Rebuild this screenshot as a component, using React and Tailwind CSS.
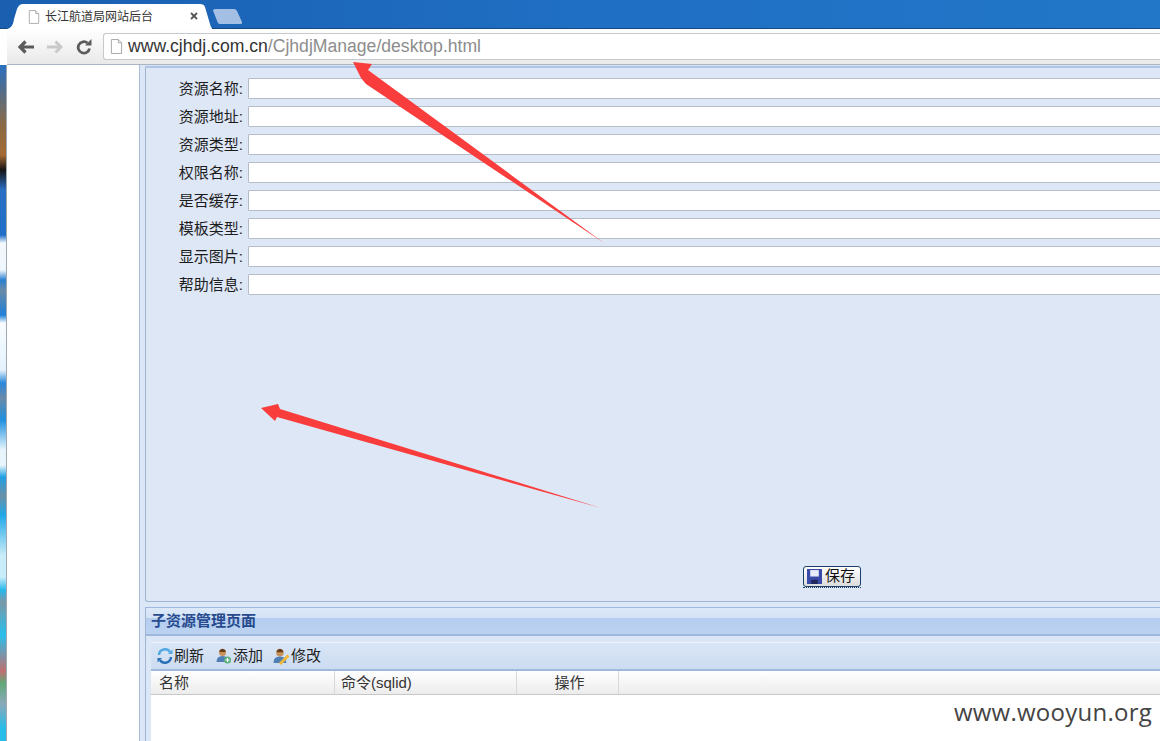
const labels = ["资源名称", "资源地址", "资源类型", "权限名称", "是否缓存", "模板类型", "显示图片", "帮助信息"];
const cjk = { fontFamily: '"Liberation Sans","Noto Sans CJK SC",sans-serif' };

function PageIcon({ className }) {
  return (
    <svg viewBox="0 0 14 16" className={className}>
      <path d="M1.5 .5H9L12.5 4V15.5H1.5Z" fill="#fff" stroke="#a3a3a3" />
      <path d="M9 .5V4H12.5" fill="#eee" stroke="#a3a3a3" />
    </svg>
  );
}

function Field({ label }) {
  return (
    <div className="flex items-center h-[28px]">
      <div className="w-[96px] text-right text-[15px] text-[#1c1c1c] pr-[5px] pt-[1px] leading-[21px] shrink-0 whitespace-nowrap">{label}:</div>
      <div className="flex-1 -mr-[4px] h-[21px] bg-white border border-[#b4bdc9] rounded-[1px]" />
    </div>
  );
}

function Tool({ icon, label, w }) {
  return (
    <div className={`flex items-center ${w}`}>
      {icon}
      <span className="text-[15px] text-[#222] ml-[1px]">{label}</span>
    </div>
  );
}

export default function App() {
  return (
    <div className="relative w-[1160px] h-[741px] overflow-hidden flex flex-col bg-white" style={cjk}>
      {/* browser chrome */}
      <div className="h-[29px] shrink-0 bg-gradient-to-r from-[#1a5fb0] via-[#1f6fc4] to-[#2277c8] border-b border-[#14497f] flex items-end pl-[7px]">
        <div className="relative z-10 -mb-[1px] w-[205px] h-[25px] flex items-center pl-[21px]">
          <svg viewBox="0 0 205 25" className="absolute inset-0 w-[205px] h-[25px]">
            <path d="M0 25Q6 24 7 15L10 5Q12 0 16 0H193Q197 0 198 3L203 20Q204 24 205 24V25Z" fill="#fff" />
          </svg>
          <PageIcon className="relative w-[12px] h-[14px]" />
          <span className="relative ml-[5px] text-[12px] text-[#333]">长江航道局网站后台</span>
          <svg viewBox="0 0 8 8" className="absolute left-[183px] top-[8px] w-[8px] h-[8px]">
            <path d="M1 1L7 7M7 1L1 7" stroke="#555" strokeWidth="1.8" />
          </svg>
        </div>
        <svg viewBox="0 0 31 15" className="w-[31px] h-[15px] mb-[4px]">
          <path d="M1 1.500Q1 0 3 0H22Q24 0 25 2L30 13Q30.500 15 28 15H8Q6 15 5.500 13Z" fill="#a4bfe4" />
        </svg>
      </div>
      <div className="h-[36px] shrink-0 flex bg-gradient-to-b from-white to-[#e9e9e9] border-b border-[#a9b4c4] ml-[7px] items-center pl-[11px] pr-0">
        <svg viewBox="0 0 16 14" className="w-[16px] h-[14px]">
          <path d="M7.500 1.500L2 7L7.500 12.500M3 7H16" fill="none" stroke="#5b5b5b" strokeWidth="3.200" />
        </svg>
        <svg viewBox="0 0 16 14" className="w-[16px] h-[14px] ml-[13px]">
          <path d="M8.500 1.500L14 7L8.500 12.500M13 7H0" fill="none" stroke="#c9c9c9" strokeWidth="3" />
        </svg>
        <svg viewBox="0 0 16 16" className="w-[16px] h-[16px] ml-[13px]">
          <path d="M13.500 9.500A5.700 5.700 0 1 1 11.500 4" fill="none" stroke="#5b5b5b" strokeWidth="2.800" />
          <path d="M9 6.500H15.500V0Z" fill="#5b5b5b" />
        </svg>
        <div className="ml-[11px] flex-1 h-[27px] bg-white border border-[#c6c9cd] border-r-0 rounded-l-[3px] flex items-center pl-[6px]">
          <PageIcon className="w-[13px] h-[15px]" />
          <span className="ml-[5px] text-[17.6px] text-[#333] whitespace-nowrap">
            www.cjhdj.com.cn<span className="text-[#8d8d8d]">/CjhdjManage/desktop.html</span>
          </span>
        </div>
      </div>

      {/* page */}
      <div className="flex-1 min-h-0 flex">
        <div className="w-[7px] shrink-0 border-r border-[#9fa8b0] bg-[linear-gradient(#2a6fc0_0px,#8a6a44_60px,#a56a34_90px,#141414_105px,#2a6fc4_125px,#1f6fc8_170px,#f4f8fc_178px,#eef6fc_205px,#2a80d4_215px,#6a8aa8_225px,#1f80d8_250px,#f8fcff_258px,#e4f2fc_305px,#2a88dc_318px,#6a8aa8_333px,#1f90e0_355px,#e8f6fc_385px,#e8f6fc_400px,#20a0e4_412px,#6a90a8_431px,#20a8e8_450px,#c8ecf8_490px,#c8ecf8_512px,#28b8ec_525px,#7a98a8_537px,#28c0ec_570px,#c07070_606px,#60a878_618px,#8aa8b8_639px,#28bce8_663px)]" />
        <div className="w-[132px] shrink-0 bg-white" />
        <div className="flex-1 min-w-0 border-l border-[#a9bcd8] bg-[#dbe6f6] pl-[5px] flex flex-col">
          <div className="h-[1px] bg-[#dbe4f2] shrink-0" />
          <div className="h-[2px] bg-[#b0c4e6] shrink-0" />
          <div className="h-[534px] shrink-0 bg-[#dee7f6] border border-r-0 border-t-0 border-[#9fb5d3] rounded-bl-[3px] flex flex-col">
            <div className="pl-[6px] pt-[6px]">
              {labels.map((l) => (
                <Field key={l} label={l} />
              ))}
            </div>
            <div className="flex-1 flex items-end pl-[657px] pb-[13px]">
              <div className="w-[58px] h-[22px] border-b border-dotted border-[#1c3f66]">
                <div className="h-[21px] rounded-[3px] border border-[#1c3f66] bg-gradient-to-b from-white to-[#dcdcdc] flex items-center pl-[3px]">
                  <svg viewBox="0 0 14 14" className="w-[15px] h-[15px] shrink-0">
                    <path d="M0 0H14V14H0Z" fill="#3a4aa8" />
                    <path d="M3 1H11V7H3Z" fill="#e8ecf8" />
                    <path d="M4 10H10V14H4Z" fill="#22285e" />
                  </svg>
                  <span className="ml-[3px] text-[15px] text-[#111] whitespace-nowrap">保存</span>
                </div>
              </div>
            </div>
          </div>
          <div className="h-[5px] shrink-0" />
          <div className="flex-1 min-h-0 border-l border-[#9fb5d3] flex flex-col">
            <div className="h-[29px] shrink-0 border-t border-b-2 border-[#9fb8de] bg-[linear-gradient(#dde9f8_0%,#d3e2f5_38%,#b5cdf0_40%,#bcd2f1_100%)] flex items-center pl-[5px]">
              <span className="text-[15px] font-bold text-[#274b8e] whitespace-nowrap">子资源管理页面</span>
            </div>
            <div className="flex-1 min-h-0 bg-[#dbe6f6] pl-[5px] pt-[6px] flex flex-col">
              <div className="h-[29px] shrink-0 border-t border-[#eef3fb] border-b-2 border-b-[#9fb8de] bg-gradient-to-b from-[#dae6f6] to-[#ccdcf1] flex items-center pl-[6px]">
                <Tool
                  w="w-[58px]"
                  label="刷新"
                  icon={
                    <svg viewBox="0 0 16 16" className="w-[16px] h-[16px]">
                      <path d="M2 7A6 6 0 0 1 13 4" fill="none" stroke="#4fa8e0" strokeWidth="2.400" />
                      <path d="M14 9A6 6 0 0 1 3 12" fill="none" stroke="#2a70b8" strokeWidth="2.400" />
                      <path d="M11 6H15.500V1.500Z" fill="#4fa8e0" />
                      <path d="M5 10H.5V14.500Z" fill="#2a70b8" />
                    </svg>
                  }
                />
                <Tool
                  w="w-[57px]"
                  label="添加"
                  icon={
                    <svg viewBox="0 0 16 16" className="w-[17px] h-[16px]">
                      <circle cx="7" cy="4.500" r="3.500" fill="#c9925a" />
                      <path d="M4 2.500Q7 -1 10 2.500L10 4H4Z" fill="#6b3f1c" />
                      <path d="M1 14Q1 8 7 8Q13 8 13 14Z" fill="#4f7fb5" />
                      <circle cx="12" cy="12" r="3.500" fill="#5cae7a" />
                      <path d="M12 10V14M10 12H14" stroke="#fff" strokeWidth="1.200" />
                    </svg>
                  }
                />
                <Tool
                  w="w-[58px]"
                  label="修改"
                  icon={
                    <svg viewBox="0 0 16 16" className="w-[18px] h-[17px]">
                      <circle cx="7" cy="4.500" r="3.500" fill="#c9925a" />
                      <path d="M4 2.500Q7 -1 10 2.500L10 4H4Z" fill="#6b3f1c" />
                      <path d="M1 14Q1 8 7 8Q13 8 13 14Z" fill="#4f7fb5" />
                      <path d="M6 14L14 6L16 8L8 16Z" fill="#f0b93c" />
                    </svg>
                  }
                />
              </div>
              <div className="flex-1 min-h-0 bg-white">
                <div className="h-[24px] flex bg-gradient-to-b from-white to-[#ececec] border-b border-[#c8c8c8] text-[15px] text-[#333] items-center whitespace-nowrap">
                  <div className="w-[184px] h-full border-r border-[#d8d8d8] pl-[8px] pt-[1px] flex items-center">名称</div>
                  <div className="w-[182px] h-full border-r border-[#d8d8d8] pl-[6px] pt-[1px] flex items-center">命令(sqlid)</div>
                  <div className="w-[102px] h-full border-r border-[#d8d8d8] pl-[4px] pt-[1px] flex items-center justify-center">操作</div>
                </div>
              </div>
            </div>
          </div>
        </div>
      </div>

      {/* annotation arrows */}
      <svg viewBox="0 0 1160 741" className="absolute inset-0 w-[1160px] h-[741px] pointer-events-none">
        <path d="M353 62L372 64L368 70L604 243L366 84L361 78Z" fill="#f93c3c" />
        <path d="M261 408L278 404L280 409L601 508L277 417L275 421Z" fill="#f93c3c" />
      </svg>
      <div className="absolute right-[8px] top-[697px] text-[24px] leading-[30px] text-[#444] tracking-[0.25px]" style={{ fontFamily: '"Open Sans",sans-serif' }}>
        www.wooyun.org
      </div>
    </div>
  );
}
